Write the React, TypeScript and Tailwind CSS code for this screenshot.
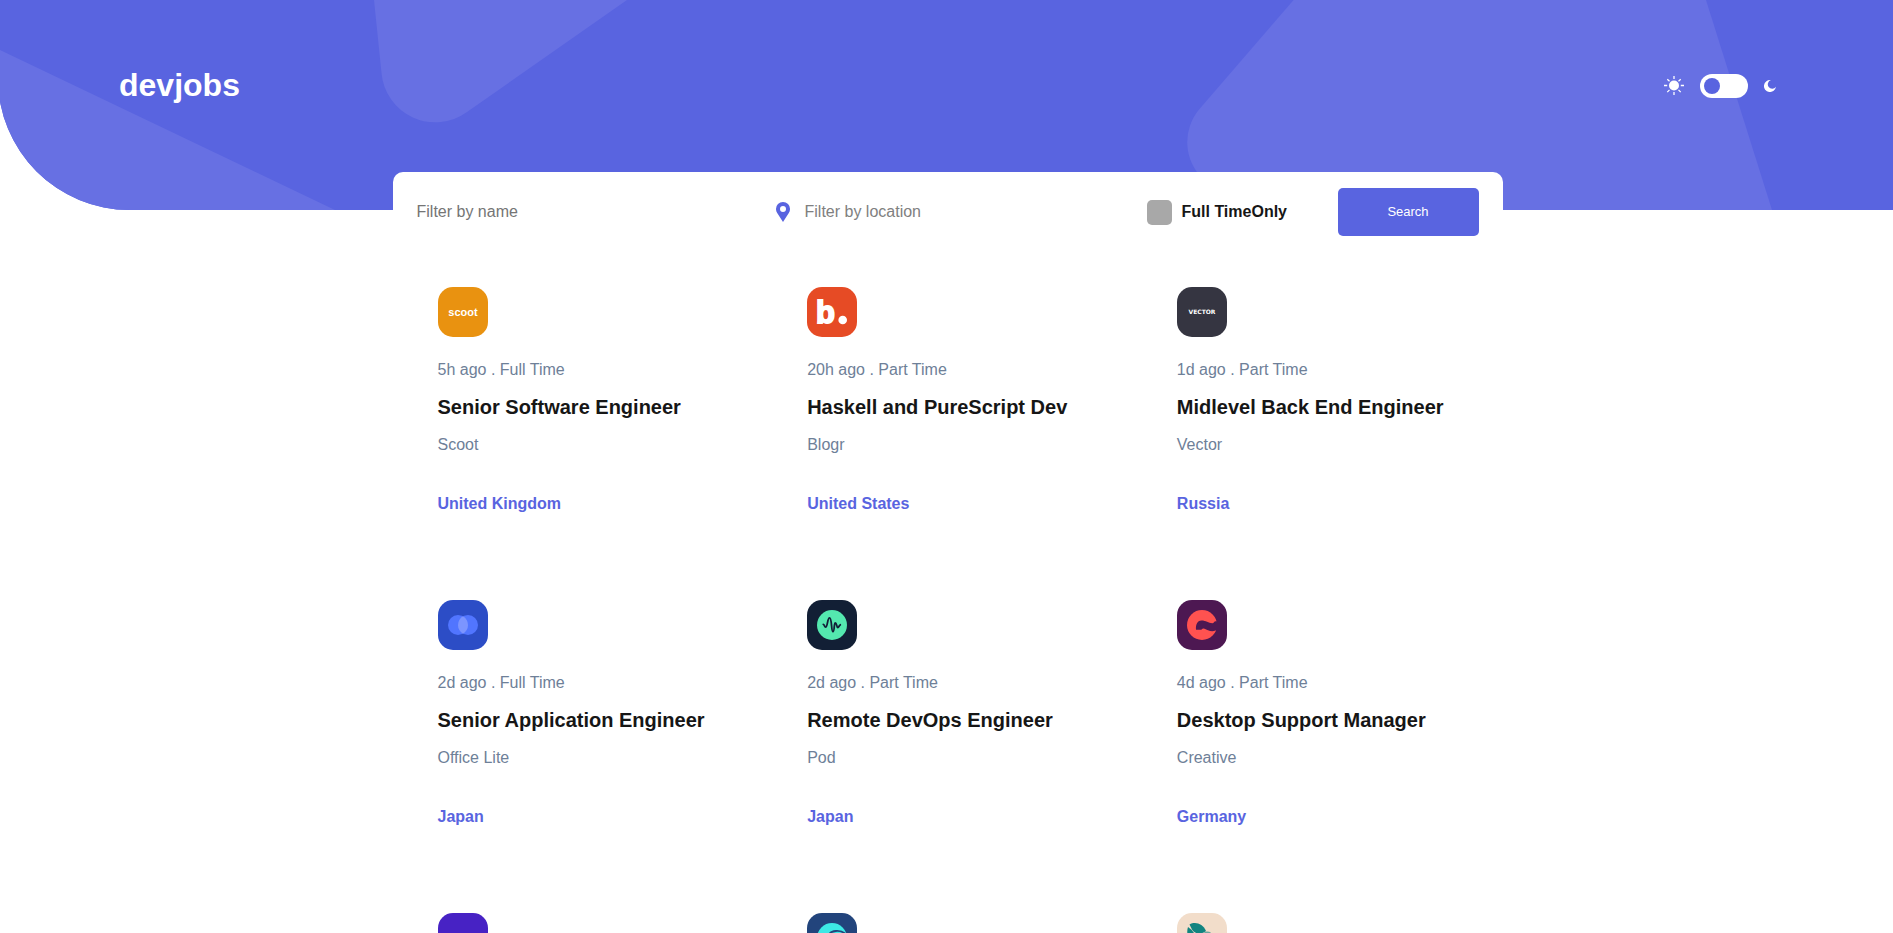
import React from "react";

function ScootLogo() {
  return (
    <svg viewBox="0 0 50 50" className="size-full" aria-hidden="true">
      <text x="25" y="29" textAnchor="middle" fill="#fff" fontFamily="'Liberation Sans', sans-serif" fontWeight="700" fontSize="11">scoot</text>
    </svg>
  );
}

function BlogrLogo() {
  return (
    <svg viewBox="0 0 50 50" className="size-full" aria-hidden="true">
      <text x="9" y="36" fill="#fff" stroke="#fff" strokeWidth="1.800" fontFamily="'Liberation Sans', sans-serif" fontWeight="700" fontSize="31">b</text>
      <circle cx="35.700" cy="33" r="4.300" fill="#fff" />
    </svg>
  );
}

function VectorLogo() {
  return (
    <svg viewBox="0 0 50 50" className="size-full" aria-hidden="true">
      <text x="25" y="27" textAnchor="middle" fill="#fff" fontFamily="'DejaVu Sans', sans-serif" fontWeight="700" fontSize="6">VECTOR</text>
    </svg>
  );
}

function OfficeLiteLogo() {
  return (
    <svg viewBox="0 0 50 50" className="size-full" aria-hidden="true">
      <circle cx="20" cy="25" r="10" fill="#5175ff" />
      <circle cx="30" cy="25" r="10" fill="#5175ff" />
      <path d="M25 16.34a10 10 0 0 1 0 17.32a10 10 0 0 1 0-17.32z" fill="#7c95ff" />
    </svg>
  );
}

function PodLogo() {
  return (
    <svg viewBox="0 0 50 50" className="size-full" aria-hidden="true">
      <circle cx="25" cy="25" r="15" fill="#54e8af" />
      <path
        d="M16.300 24.300c1 0 1.200 2.900 2.300 2.900 2 0 1.800-9.400 3.900-9.400 2.600 0 1.500 13.900 3.500 13.900 1.700 0 .8-8.900 2.300-8.900s1.200 4.700 2.500 4.700c1.100 0 1.300-2.200 2.500-2.700"
        fill="none"
        stroke="#121f37"
        strokeWidth="1.800"
        strokeLinecap="round"
      />
    </svg>
  );
}

function CreativeLogo() {
  return (
    <svg viewBox="0 0 50 50" className="size-full" aria-hidden="true">
      <circle cx="25" cy="25" r="15" fill="#ff5250" />
      <path
        d="M19 29.800c-.4-4.500 1-9.200 5.500-9.200 4.500 0 7 2.700 11 2.600 1.200 0 1.800-2 3-2H42v9.300h-3.600c-2 1-5 .8-7.400-.2-1.800-.8-3-2-4.800-1.900-1 0-1.500 1.400-2.700 1.400z"
        fill="#4d1852"
      />
    </svg>
  );
}

function MakerLogo() {
  return (
    <svg viewBox="0 0 50 50" className="size-full" aria-hidden="true">
      <circle cx="25" cy="25" r="15" fill="#3de9e5" />
      <path d="M22 21.500c2-4 11-5 16-1" fill="none" stroke="#22447c" strokeWidth="1.800" />
    </svg>
  );
}

function CoffeeLogo() {
  return (
    <svg viewBox="0 0 50 50" className="size-full" aria-hidden="true">
      <path d="M12.500 11.500c6-3.500 13.500-.5 16.500 6.500-5 4-11 3-14-1.500z" fill="#118480" />
      <path d="M11 14c-2 6 0 12 6 15 3-6 0-11-6-15z" fill="#118480" />
      <path d="M26 21c2-3 5-3 8-1.500l-3 2z" fill="#118480" opacity=".6" />
    </svg>
  );
}

type Job = {
  company: string;
  logo: React.ReactNode;
  tile: string;
  meta?: string;
  title?: string;
  country?: string;
};

const jobs: Job[] = [
  { company: "Scoot", logo: <ScootLogo />, tile: "bg-[#e99210]", meta: "5h ago . Full Time", title: "Senior Software Engineer", country: "United Kingdom" },
  { company: "Blogr", logo: <BlogrLogo />, tile: "bg-[#e64b25]", meta: "20h ago . Part Time", title: "Haskell and PureScript Dev", country: "United States" },
  { company: "Vector", logo: <VectorLogo />, tile: "bg-[#353541]", meta: "1d ago . Part Time", title: "Midlevel Back End Engineer", country: "Russia" },
  { company: "Office Lite", logo: <OfficeLiteLogo />, tile: "bg-[#2c4dc6]", meta: "2d ago . Full Time", title: "Senior Application Engineer", country: "Japan" },
  { company: "Pod", logo: <PodLogo />, tile: "bg-[#121f35]", meta: "2d ago . Part Time", title: "Remote DevOps Engineer", country: "Japan" },
  { company: "Creative", logo: <CreativeLogo />, tile: "bg-[#4d1852]", meta: "4d ago . Part Time", title: "Desktop Support Manager", country: "Germany" },
  { company: "", logo: null, tile: "bg-[#4722c4]" },
  { company: "", logo: <MakerLogo />, tile: "bg-[#22447c]" },
  { company: "", logo: <CoffeeLogo />, tile: "bg-[#f2ddca]" },
];

function JobCard({ job }: { job: Job }) {
  return (
    <article className="px-[45px]">
      <div className={`size-[50px] overflow-hidden rounded-[15px] ${job.tile}`}>{job.logo}</div>
      {job.title && (
        <>
          <p className="mt-[21px] text-[#6e8098]">{job.meta}</p>
          <h2 className="mt-[11px] text-xl leading-7 font-bold">
            <a href="#" className="text-[#161616]">{job.title}</a>
          </h2>
          <p className="mt-3 text-[#6e8098]">{job.company}</p>
          <p className="mt-[35px] font-bold text-[#5964e0]">{job.country}</p>
        </>
      )}
    </article>
  );
}

function HeaderPattern() {
  return (
    <svg viewBox="0 0 1893 210" className="absolute inset-x-0 top-0 -z-10 w-full" aria-hidden="true">
      <defs>
        <clipPath id="banner">
          <path d="M-2 0H1893V210H129.500A131.500 131.500 0 0 1-2 78.500z" />
        </clipPath>
      </defs>
      <g clipPath="url(#banner)">
        <path d="M-4 0H1893V210H-4z" fill="#5964e0" />
        <g fill="#6770e3">
          <path d="M-4 48L335 210H-4z" />
          <path d="M374 0L381.500 73A54 54 0 0 0 467 112L627 0z" />
          <path d="M1293.600 0L1199.500 109A51 51 0 0 0 1203 179L1240 210H1772L1706 0z" />
        </g>
      </g>
    </svg>
  );
}

function Header() {
  return (
    <header className="flex h-[172px] items-start justify-between pt-[65px] pr-[117px] pl-[119px]">
      <h1 className="text-[32px] leading-10 font-bold text-white">devjobs</h1>
      <div className="flex h-[42px] items-center gap-4">
        <svg viewBox="0 0 20 20" className="size-5" aria-hidden="true">
          <circle cx="10" cy="9.500" r="5" fill="#fff" />
          <path
            d="M10 0v3M10 16v3M0 9.500h3.200M16.800 9.500H20M3.300 3.200l2.200 2M14.500 13.900l2.200 2.200M3.300 16.100l2.200-2.200M14.500 5.200l2.200-2"
            stroke="#fff"
            strokeWidth="1.300"
          />
        </svg>
        <label className="flex h-6 w-12 cursor-pointer items-center rounded-full bg-white px-1">
          <input type="checkbox" role="switch" aria-label="Dark mode" className="size-4 appearance-none rounded-full bg-[#5964e0] checked:ml-6" />
        </label>
        <svg viewBox="0 0 12 12" className="size-3" aria-hidden="true">
          <path d="M6.900 0.100A4.400 4.400 0 1 0 11.900 6.700A6 6 0 1 1 6.900 0.100z" fill="#fff" />
        </svg>
      </div>
    </header>
  );
}

function SearchBar() {
  return (
    <form className="flex h-20 items-center rounded-[10px] bg-white px-6" onSubmit={(e) => e.preventDefault()}>
      <input
        type="text"
        aria-label="Filter by name"
        placeholder="Filter by name"
        className="h-10 min-w-0 flex-1 outline-none placeholder:text-[#757575]"
      />
      <label className="flex w-[371px] items-center gap-[15px]">
        <svg viewBox="0 0 14 20" className="h-5 w-[14px] shrink-0" aria-hidden="true">
          <path
            d="M7 0a7 7 0 0 0-7 7.200c0 1.500.4 2.700 1.200 3.800L7 20l5.800-9c.8-1.100 1.200-2.300 1.200-3.800A7 7 0 0 0 7 0zm0 10a3 3 0 1 1 0-6 3 3 0 0 1 0 6z"
            fill="#5964e0"
          />
        </svg>
        <input
          type="text"
          aria-label="Filter by location"
          placeholder="Filter by location"
          className="h-10 min-w-0 flex-1 outline-none placeholder:text-[#808080]"
        />
      </label>
      <label className="flex w-[191px] items-center gap-[10px] font-bold text-[#161616]">
        <input type="checkbox" className="size-[25px] appearance-none rounded-[5px] bg-[#a8a8a8] checked:bg-[#5964e0]" />
        <span>Full TimeOnly</span>
      </label>
      <button type="submit" className="h-12 w-[141px] rounded-[5px] bg-[#5964e0] text-[13px] text-white">
        Search
      </button>
    </form>
  );
}

export default function App() {
  return (
    <div className="relative isolate h-screen overflow-hidden bg-white font-['Liberation_Sans',Arial,sans-serif] text-base">
      <HeaderPattern />
      <Header />
      <div className="pl-0.5">
        <main className="mx-auto max-w-[1110px]">
          <SearchBar />
          <section className="grid auto-rows-[313px] grid-cols-3 pt-[35px] pr-px" aria-label="Jobs">
            {jobs.map((job, i) => (
              <JobCard key={i} job={job} />
            ))}
          </section>
        </main>
      </div>
    </div>
  );
}
